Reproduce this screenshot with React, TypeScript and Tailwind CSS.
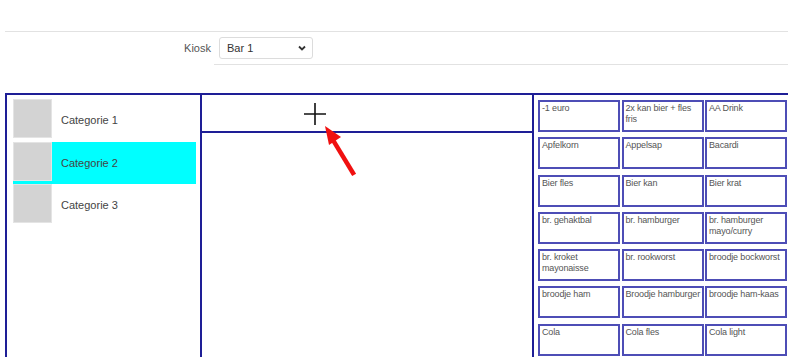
const categories = ['Categorie 1', 'Categorie 2', 'Categorie 3'];

const products = [
  '-1 euro',
  '2x kan bier + fles fris',
  'AA Drink',
  'Apfelkorn',
  'Appelsap',
  'Bacardi',
  'Bier fles',
  'Bier kan',
  'Bier krat',
  'br. gehaktbal',
  'br. hamburger',
  'br. hamburger mayo/curry',
  'br. kroket mayonaisse',
  'br. rookworst',
  'broodje bockworst',
  'broodje ham',
  'Broodje hamburger',
  'broodje ham-kaas',
  'Cola',
  'Cola fles',
  'Cola light',
];

export default function App() {
  return (
    <div className="h-[357px] overflow-hidden bg-white font-['Liberation_Sans',Arial,sans-serif] relative">
      {/* Header rule */}
      <div className="pt-[31px]">
        <div className="ml-[5px] w-[783px] border-t border-[#e2e2e2]" />
      </div>

      {/* Kiosk selector */}
      <div className="flex items-center mt-[5px] h-[22px]">
        <label className="w-[211px] text-right text-[11px] text-[#555]">Kiosk</label>
        <div className="ml-[8px] w-[94px] h-[22px] rounded-[3px] border border-[#dcdcdc] flex items-center justify-between pl-[7px] pr-[5px] text-[11px] text-[#333]">
          <span>Bar 1</span>
          <svg width="10" height="10" viewBox="0 0 10 10" fill="none">
            <path d="M2 3.5 L5 6.5 L8 3.5" stroke="#333" strokeWidth="1.8" />
          </svg>
        </div>
      </div>
      <div className="ml-[214px] mt-[5px] w-[574px] border-t border-[#e2e2e2]" />

      {/* Main area */}
      <div className="mt-[28px] ml-[5px] w-[783px] h-[300px] border-t-2 border-[#1e1e96] flex">
        {/* Categories */}
        <div className="w-[197px] border-x-2 border-[#1e1e96] pl-[6px] pt-[4px] flex flex-col">
          {categories.map((c, i) => (
            <div
              key={c}
              className={`flex w-[183px] h-[42.5px] ${i === 1 ? 'bg-[#00ffff]' : ''}`}
            >
              <div className="w-[39px] h-[39px] bg-[#d3d3d3] border border-[#e4e4e4]" />
              <div className="flex items-center pl-[9px] text-[11px] text-[#444]">{c}</div>
            </div>
          ))}
        </div>

        {/* Order area */}
        <div className="w-[332px] border-r-2 border-[#1e1e96] flex flex-col">
          <div className="h-[38px] border-b-2 border-[#1e1e96] flex items-center pl-[101px]">
            <svg width="24" height="24" viewBox="0 0 24 24" className="mt-[1px]">
              <path d="M12 1 V23 M1 12 H23" stroke="#111" strokeWidth="1.6" />
            </svg>
          </div>
          <div className="flex-1" />
        </div>

        {/* Products */}
        <div className="flex-1 pl-[4px] pt-[5px]">
          <div className="grid grid-cols-[82px_82px_82px] gap-x-[1.5px] gap-y-[5.3px]">
            {products.map((p) => (
              <div
                key={p}
                className="h-[32px] border-2 border-[#4d4db6] pl-[2px] pr-0 pt-[1px] text-[9px] leading-[11px] tracking-[-0.15px] text-[#555]"
              >
                {p}
              </div>
            ))}
          </div>
        </div>
      </div>

      {/* Annotation arrow */}
      <svg className="absolute left-[318px] top-[122px]" width="44" height="58" viewBox="0 0 44 58">
        <path d="M35 51 L15 18" stroke="#f01010" strokeWidth="4.5" strokeLinecap="square" />
        <path d="M7 4 L23 15 L11 23 Z" fill="#f01010" />
      </svg>
    </div>
  );
}
